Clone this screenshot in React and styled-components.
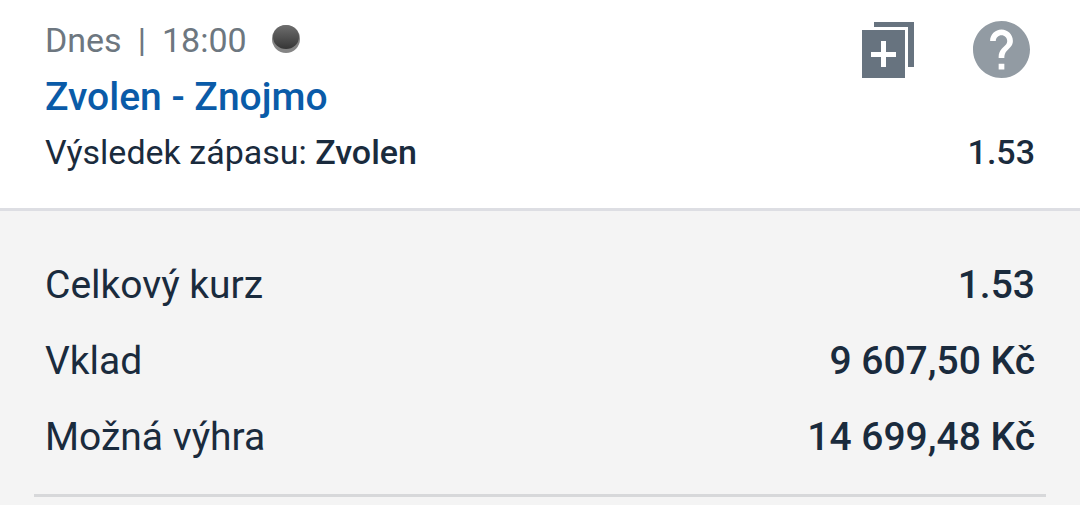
import React from "react";
import styled, { createGlobalStyle } from "styled-components";

const GlobalStyle = createGlobalStyle`
  * { box-sizing: border-box; }
  body { margin: 0; background: #f4f4f4; font-family: Roboto, "Liberation Sans", sans-serif; color: #1a2b3d; }
`;

const Ticket = styled.main`
  width: 100%;
`;

const Match = styled.section`
  display: flex;
  flex-direction: column;
  gap: 7px;
  padding: 16px 45px 32px;
  background: #fff;
  border-bottom: 3px solid #dddee3;
`;

const MatchTop = styled.header`
  display: flex;
  justify-content: space-between;
  align-items: flex-start;
`;

const Heading = styled.div`
  display: flex;
  flex-direction: column;
  gap: 9px;
`;

const Meta = styled.div`
  display: flex;
  align-items: center;
  gap: 16px;
  font-size: 34px;
  line-height: 48px;
  color: #6d7780;
`;

const Puck = styled.svg`
  width: 30px;
  height: 30px;
  margin: 0 0 2px 8px;
`;

const Title = styled.a`
  font-size: 39px;
  line-height: 48px;
  font-weight: 500;
  color: #0a5ba8;
  text-decoration: none;
`;

const Actions = styled.div`
  display: flex;
  gap: 59px;
  padding: 5px 5px 0 0;
`;

const IconButton = styled.button`
  display: flex;
  padding: 0;
  border: 0;
  background: none;
  cursor: pointer;
`;

const Row = styled.div`
  display: flex;
  justify-content: space-between;
  font-size: ${(p) => (p.$small ? 34 : 39)}px;
  line-height: 48px;
`;

const Strong = styled.strong`
  font-weight: 500;
`;

const Label = styled.dt`
  margin: 0;
`;

const Value = styled.dd`
  margin: 0;
  font-weight: 500;
`;

const Summary = styled.section`
  padding: 50px 34px 0;
`;

const Totals = styled.dl`
  display: flex;
  flex-direction: column;
  gap: 28px;
  margin: 0;
  padding: 0 11px 33px;
  border-bottom: 3px solid #d7d8da;
`;

const totals = [
  ["Celkový kurz", "1.53"],
  ["Vklad", "9 607,50 Kč"],
  ["Možná výhra", "14 699,48 Kč"],
];

export default function App() {
  return (
    <Ticket>
      <GlobalStyle />
      <Match>
        <MatchTop>
          <Heading>
            <Meta>
              <span>Dnes</span>
              <span>|</span>
              <span>18:00</span>
              <Puck viewBox="0 0 30 30" aria-hidden="true">
                <defs>
                  <linearGradient id="puck" x1="0" y1="0" x2="0" y2="1">
                    <stop offset="0" stopColor="#6e6e6e" />
                    <stop offset="1" stopColor="#363636" />
                  </linearGradient>
                </defs>
                <circle cx="15" cy="15" r="14" fill="#858585" />
                <ellipse cx="15" cy="13" rx="13" ry="12" fill="url(#puck)" />
              </Puck>
            </Meta>
            <Title href="#match">Zvolen - Znojmo</Title>
          </Heading>
          <Actions>
            <IconButton type="button" aria-label="Přidat na tiket">
              <svg width="52" height="57" viewBox="0 0 52 57">
                <path fill="#67737f" fillRule="evenodd" d="M12 1H52V46H46V6H12ZM0 9H43V57H0ZM19 20V31H9V36H19V46H24V36H34V31H24V20Z" />
              </svg>
            </IconButton>
            <IconButton type="button" aria-label="Nápověda">
              <svg width="57" height="57" viewBox="2 2 20 20">
                <path fill="#929ba3" d="M12 2C6.48 2 2 6.48 2 12s4.48 10 10 10 10-4.48 10-10S17.52 2 12 2zm1 17h-2v-2h2v2zm2.07-7.75l-.9.92C13.45 12.9 13 13.5 13 15h-2v-.5c0-1.1.45-2.1 1.17-2.83l1.24-1.26c.37-.36.59-.86.59-1.41 0-1.1-.9-2-2-2s-2 .9-2 2H8c0-2.21 1.79-4 4-4s4 1.79 4 4c0 .88-.36 1.68-.93 2.25z" />
              </svg>
            </IconButton>
          </Actions>
        </MatchTop>
        <Row $small>
          <span>Výsledek zápasu: <Strong>Zvolen</Strong></span>
          <Strong>1.53</Strong>
        </Row>
      </Match>
      <Summary>
        <Totals>
          {totals.map(([label, value]) => (
            <Row key={label}>
              <Label>{label}</Label>
              <Value>{value}</Value>
            </Row>
          ))}
        </Totals>
      </Summary>
    </Ticket>
  );
}
